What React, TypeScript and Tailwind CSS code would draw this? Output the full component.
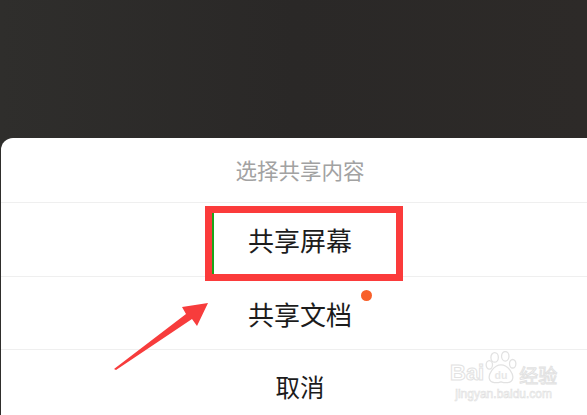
import React from "react";

const font = { fontFamily: '"Noto Sans CJK SC", "Noto Sans", sans-serif' };

export default function App() {
  return (
    <div
      className="relative w-[587px] h-[415px] overflow-hidden bg-gradient-to-r from-[#2f2e2c] via-[#2a2827] to-[#2d2a28] flex flex-col"
      style={font}
    >
      <div className="h-[138px] shrink-0" />
      <div className="flex-1 bg-white rounded-tl-[12px] ml-[1px] flex flex-col">
        <div className="h-[65px] shrink-0 flex items-center justify-center text-[21.5px] text-[#a2a2a2] border-b border-[#efefef] pl-[12px]">
          选择共享内容
        </div>
        <div className="h-[74px] shrink-0 flex items-center justify-center text-[26px] text-[#1c1c1c] border-b border-[#efefef] pl-[12px]">
          共享屏幕
        </div>
        <div className="h-[73px] shrink-0 flex items-center justify-center text-[26px] text-[#1c1c1c] border-b border-[#efefef] pl-[12px]">
          <span className="relative">
            共享文档
            <span className="absolute right-[-20px] top-[-4px] w-[11px] h-[11px] rounded-full bg-[#f8602a]" />
          </span>
        </div>
        <div className="h-[74px] shrink-0 flex items-center justify-center text-[24.5px] text-[#1c1c1c] pl-[12px]">
          取消
        </div>
      </div>

      {/* red highlight box */}
      <div className="absolute left-[205px] top-[206px] w-[198px] h-[75px] border-[7px] border-[#fb3b3b]" />
      <div className="absolute left-[212px] top-[213px] w-[2px] h-[61px] bg-[#1aa51a]" />

      {/* red arrow */}
      <svg className="absolute left-0 top-0" width="587" height="415" viewBox="0 0 587 415">
        <polygon
          points="114,369 186,314 182,307 208,303 197,326 192,319 116,370"
          fill="#f73c3c"
        />
      </svg>

      {/* watermark */}
      <div className="absolute left-[450px] top-[351px] flex flex-col items-center">
        <div className="flex items-end gap-[1px] leading-none">
          <span
            className="text-[22px] font-bold text-transparent [-webkit-text-stroke:1px_#e2e2e2] mb-[1px]"
            style={{ fontFamily: '"Liberation Sans", sans-serif' }}
          >
            Bai
          </span>
          <svg width="32" height="34" viewBox="0 0 30 32">
            <g fill="none" stroke="#e2e2e2" strokeWidth="1.2">
              <ellipse cx="9" cy="6" rx="3.5" ry="4.5" />
              <ellipse cx="19" cy="5" rx="3.5" ry="4.5" />
              <ellipse cx="4" cy="13" rx="3" ry="4" />
              <ellipse cx="26" cy="12" rx="3" ry="4" />
              <path d="M15 13 C 8 13 3 22 4 26 C 5 31 12 30 15 29 C 18 30 25 31 26 26 C 27 22 22 13 15 13 Z" />
            </g>
            <text
              x="15"
              y="26"
              textAnchor="middle"
              fontSize="10"
              fontWeight="bold"
              fill="#e8e8e8"
              fontFamily="Liberation Sans, sans-serif"
            >
              du
            </text>
          </svg>
          <span className="text-[19px] text-transparent [-webkit-text-stroke:1px_#e2e2e2] ml-[1px] mb-[1px]">
            经验
          </span>
        </div>
        <div
          className="text-[12px] leading-none mt-[3px] text-transparent [-webkit-text-stroke:0.6px_#e0e0e0]"
          style={{ fontFamily: '"Liberation Sans", sans-serif' }}
        >
          jingyan.baidu.com
        </div>
      </div>
    </div>
  );
}
